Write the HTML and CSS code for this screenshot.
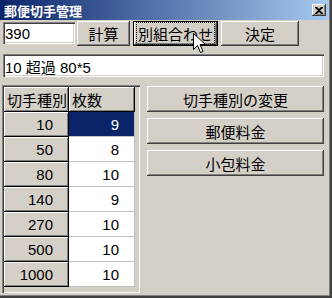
FILE: index.html
```html
<!DOCTYPE html>
<html lang="ja">
<head>
    <meta charset="UTF-8">
    <title>郵便切手管理</title>
    <link rel="stylesheet" href="styles.css">
</head>
<body>

<div class="window">
    <div class="titlebar">
        <span class="title">郵便切手管理</span>
        <button class="close" type="button">
            <svg width="8" height="7" viewBox="0 0 8 7">
                <path d="M0 0h2l2 2 2-2h2v1L5 3.5 8 6v1H6L4 5 2 7H0V6l3-2.5L0 1z" fill="#000"/>
            </svg>
        </button>
    </div>

    <div class="content">
        <div class="toprow">
            <input class="field amount" type="text" value="390">
            <button class="btn calc" type="button">計算</button>
            <button class="btn combo default" type="button">
                <span class="focus">別組合わせ</span>
                <!-- mouse pointer resting on the button -->
                <svg class="pointer" width="12" height="20" viewBox="0 0 12 20">
                    <path d="M0.5 0.5v16l4-4 3 7 2.5-1-3-7h5.5z" fill="#fff" stroke="#000" stroke-width="1"/>
                </svg>
            </button>
            <button class="btn decide" type="button">決定</button>
        </div>

        <input class="field result" type="text" value="10 超過 80*5">

        <div class="main">
            <div class="grid">
                <div class="cell fixed head">切手種別</div>
                <div class="cell fixed head">枚数</div>

                <div class="cell fixed">10</div>
                <div class="cell data selected">9</div>
                <div class="cell fixed">50</div>
                <div class="cell data">8</div>
                <div class="cell fixed">80</div>
                <div class="cell data">10</div>
                <div class="cell fixed">140</div>
                <div class="cell data">9</div>
                <div class="cell fixed">270</div>
                <div class="cell data">10</div>
                <div class="cell fixed">500</div>
                <div class="cell data">10</div>
                <div class="cell fixed">1000</div>
                <div class="cell data">10</div>
            </div>

            <div class="side">
                <button class="btn wide" type="button">切手種別の変更</button>
                <button class="btn wide" type="button">郵便料金</button>
                <button class="btn wide" type="button">小包料金</button>
            </div>
        </div>
    </div>
</div>

</body>
</html>
```

FILE: styles.css
```css
body {
    margin: 0;
    font-family: "Liberation Sans", "Noto Sans CJK JP", sans-serif;
    font-size: 15px;
    color: #000;
}

.window {
    width: 332px;
    height: 298px;
    box-sizing: border-box;
    background: #d4d0c8;
    padding: 0 3px 3px 0;
    box-shadow: inset -2px -2px #404040, inset -3px -3px #808080;
}

.titlebar {
    height: 20px;
    display: flex;
    align-items: center;
    justify-content: space-between;
    padding: 0 3px 0 4px;
    background: linear-gradient(to right, #0a246a, #a6caf0);
}

.title {
    color: #fff;
    font-weight: bold;
    font-size: 13px;
}

.close {
    width: 14px;
    height: 12px;
    padding: 0;
    border: none;
    background: #d4d0c8;
    display: flex;
    align-items: center;
    justify-content: center;
    box-shadow: inset -1px -1px #404040, inset 1px 1px #fff, inset -2px -2px #808080;
}

.content {
    padding: 1px 0 0 3px;
}

.toprow {
    display: flex;
    align-items: flex-start;
}

.field {
    box-sizing: border-box;
    height: 22px;
    margin: 1px 0 0 0;
    padding: 1px 2px 0;
    border: none;
    background: #fff;
    font: inherit;
    box-shadow: inset 1px 1px #808080, inset 2px 2px #404040, inset -1px -1px #fff, inset -2px -2px #d4d0c8;
    outline: none;
}

.amount {
    width: 72px;
    margin-right: 2px;
}

.btn {
    box-sizing: border-box;
    height: 25px;
    padding: 0;
    border: none;
    background: #d4d0c8;
    font: inherit;
    box-shadow: inset -1px -1px #404040, inset 1px 1px #fff, inset -2px -2px #808080, inset 2px 2px #d4d0c8;
}

.calc {
    width: 53px;
}

.combo {
    position: relative;
    width: 85px;
    margin-left: 3px;
    box-shadow: inset 0 0 0 1px #000, inset -2px -2px #404040, inset 2px 2px #fff, inset -3px -3px #808080;
}

.focus {
    display: inline-block;
    padding: 0 1px;
    border: 1px dotted #000;
}

.pointer {
    position: absolute;
    left: 60px;
    top: 12px;
}

.decide {
    width: 78px;
    margin-left: 3px;
}

.result {
    display: block;
    width: 321px;
    height: 23px;
    margin-top: 8px;
}

.main {
    display: flex;
    margin: 8px 0 0 -1px;
}

.grid {
    width: 138px;
    height: 208px;
    box-sizing: border-box;
    padding: 2px;
    display: grid;
    grid-template-columns: 65px 66px;
    grid-auto-rows: 25px;
    align-content: start;
    box-shadow: inset 1px 1px #808080, inset 2px 2px #404040, inset -1px -1px #fff, inset -2px -2px #d4d0c8;
}

.cell {
    box-sizing: border-box;
    display: flex;
    align-items: center;
    justify-content: flex-end;
    padding-right: 15px;
    border-right: 1px solid #c0c0c0;
    border-bottom: 1px solid #c0c0c0;
    background: #fff;
}

.fixed {
    background: #d4d0c8;
    border-color: #000;
    box-shadow: inset 1px 1px #fff, inset -1px -1px #808080;
}

.head {
    justify-content: flex-start;
    padding: 0 0 0 3px;
}

.selected {
    background: #0a246a;
    color: #fff;
}

.side {
    display: flex;
    flex-direction: column;
    gap: 6px;
    margin: 1px 0 0 7px;
}

.wide {
    width: 177px;
    height: 26px;
}
```
